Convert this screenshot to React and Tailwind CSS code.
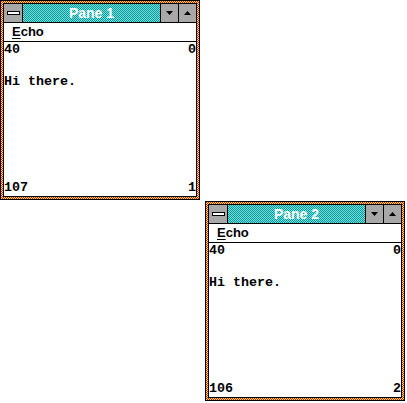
import React from 'react';

const teal =
  'bg-[image:repeating-conic-gradient(#009c9c_0%_25%,#7cdcdc_0%_50%)] bg-[length:2px_2px]';

const Arrow = ({ up }) => (
  <svg width="7" height="4" viewBox="0 0 7 4" className="block">
    {up ? <path d="M3.5 0 L7 4 L0 4 Z" fill="#000" /> : <path d="M0 0 L7 0 L3.5 4 Z" fill="#000" />}
  </svg>
);

// red/yellow dithered sizing frame
const Dither = ({ id }) => (
  <svg className="absolute inset-0 h-full w-full" shapeRendering="crispEdges">
    <defs>
      <pattern id={id} width="2" height="2" patternUnits="userSpaceOnUse">
        <rect width="2" height="2" fill="#f4e070" />
        <rect x="0" y="0" width="1" height="1" fill="#d42014" />
        <rect x="1" y="1" width="1" height="1" fill="#d42014" />
      </pattern>
    </defs>
    <rect width="100%" height="100%" fill={`url(#${id})`} />
  </svg>
);

const Pane = ({ id, title, lines, cols, className }) => {
  return (
    <div className={`absolute h-[200px] w-[200px] border border-black ${className}`}>
      <Dither id={id} />
      <div className="relative m-[2px] flex h-[194px] w-[194px] flex-col border border-black bg-white">
        {/* title bar */}
        <div className="flex h-[19px] shrink-0 border-b border-black">
          <div className="flex w-[19px] items-center justify-center border-r border-black bg-[#a8a8a8]">
            <div className="h-[4px] w-[13px] border border-black bg-white" />
          </div>
          <div
            className={`flex flex-1 items-center justify-center text-[14px] font-bold text-white ${teal}`}
            style={{ fontFamily: '"Liberation Sans", Arial, sans-serif' }}
          >
            {title}
          </div>
          <div className="flex w-[18px] items-center justify-center border-l border-black bg-[#a8a8a8]">
            <Arrow />
          </div>
          <div className="flex w-[18px] items-center justify-center border-l border-black bg-[#a8a8a8]">
            <Arrow up />
          </div>
        </div>
        {/* menu */}
        <div
          className="flex h-[19px] shrink-0 items-center border-b border-black pl-[8px] text-[13px] font-bold text-black"
          style={{ fontFamily: '"Liberation Sans", Arial, sans-serif' }}
        >
          <span>
            <span className="underline decoration-1 underline-offset-2">E</span>cho
          </span>
        </div>
        {/* text area */}
        <div
          className="flex flex-1 flex-col text-[13.33px] font-bold leading-[16px] text-black"
          style={{ fontFamily: '"Liberation Mono", "Courier New", monospace' }}
        >
          <div className="flex justify-between">
            <span>40</span>
            <span>0</span>
          </div>
          <div className="h-[16px]" />
          <div>Hi there.</div>
          <div className="mt-auto flex justify-between">
            <span>{lines}</span>
            <span>{cols}</span>
          </div>
        </div>
      </div>
    </div>
  );
};

export default function App() {
  return (
    <div className="relative h-[403px] w-[407px] overflow-hidden bg-white">
      <Pane id="d1" title="Pane 1" lines="107" cols="1" className="left-0 top-0" />
      <Pane id="d2" title="Pane 2" lines="106" cols="2" className="left-[205px] top-[201px]" />
    </div>
  );
}
